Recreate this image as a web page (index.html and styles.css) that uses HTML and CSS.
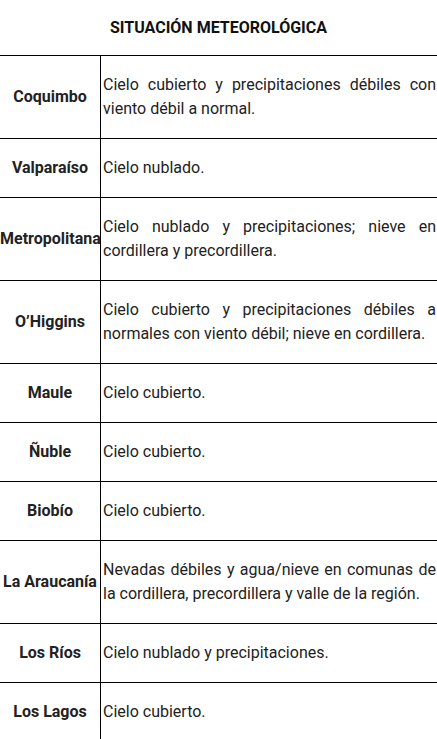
FILE: index.html
```html
<!DOCTYPE html>
<html lang="es">
<head>
<meta charset="utf-8">
<link rel="stylesheet" href="styles.css">
</head>
<body>
<h2 class="title">SITUACIÓN METEOROLÓGICA</h2>
<table class="weather">
<tbody>
<tr><th>Coquimbo</th><td>Cielo cubierto y precipitaciones débiles con viento débil a normal.</td></tr>
<tr><th>Valparaíso</th><td>Cielo nublado.</td></tr>
<tr><th>Metropolitana</th><td>Cielo nublado y precipitaciones; nieve en cordillera y precordillera.</td></tr>
<tr><th>O’Higgins</th><td>Cielo cubierto y precipitaciones débiles a normales con viento débil; nieve en cordillera.</td></tr>
<tr><th>Maule</th><td>Cielo cubierto.</td></tr>
<tr><th>Ñuble</th><td>Cielo cubierto.</td></tr>
<tr><th>Biobío</th><td>Cielo cubierto.</td></tr>
<tr><th>La Araucanía</th><td>Nevadas débiles y agua/nieve en comunas de la cordillera, precordillera y valle de la región.</td></tr>
<tr><th>Los Ríos</th><td>Cielo nublado y precipitaciones.</td></tr>
<tr><th>Los Lagos</th><td>Cielo cubierto.</td></tr>
</tbody>
</table>
</body>
</html>
```
FILE: styles.css
```css
html, body {
  margin: 0;
  padding: 0;
  background: #fff;
}
body {
  font-family: Roboto, "Liberation Sans", sans-serif;
  color: #222;
  width: 437px;
  overflow: hidden;
}
.title {
  margin: 0;
  height: 55px;
  display: flex;
  align-items: center;
  justify-content: center;
  font-size: 16px;
  font-weight: 700;
  color: #111;
}
.weather {
  width: 437px;
  border-collapse: collapse;
  table-layout: fixed;
}
.weather tr {
  border-top: 1.5px solid #000;
}
.weather th {
  width: 100px;
  padding: 17px 0;
  font-size: 16px;
  font-weight: 700;
  text-align: center;
  border-right: 1.5px solid #000;
  line-height: 24px;
  white-space: nowrap;
}
.weather td {
  padding: 17px 1px 17px 2px;
  font-size: 16px;
  line-height: 24px;
  text-align: justify;
}
```
